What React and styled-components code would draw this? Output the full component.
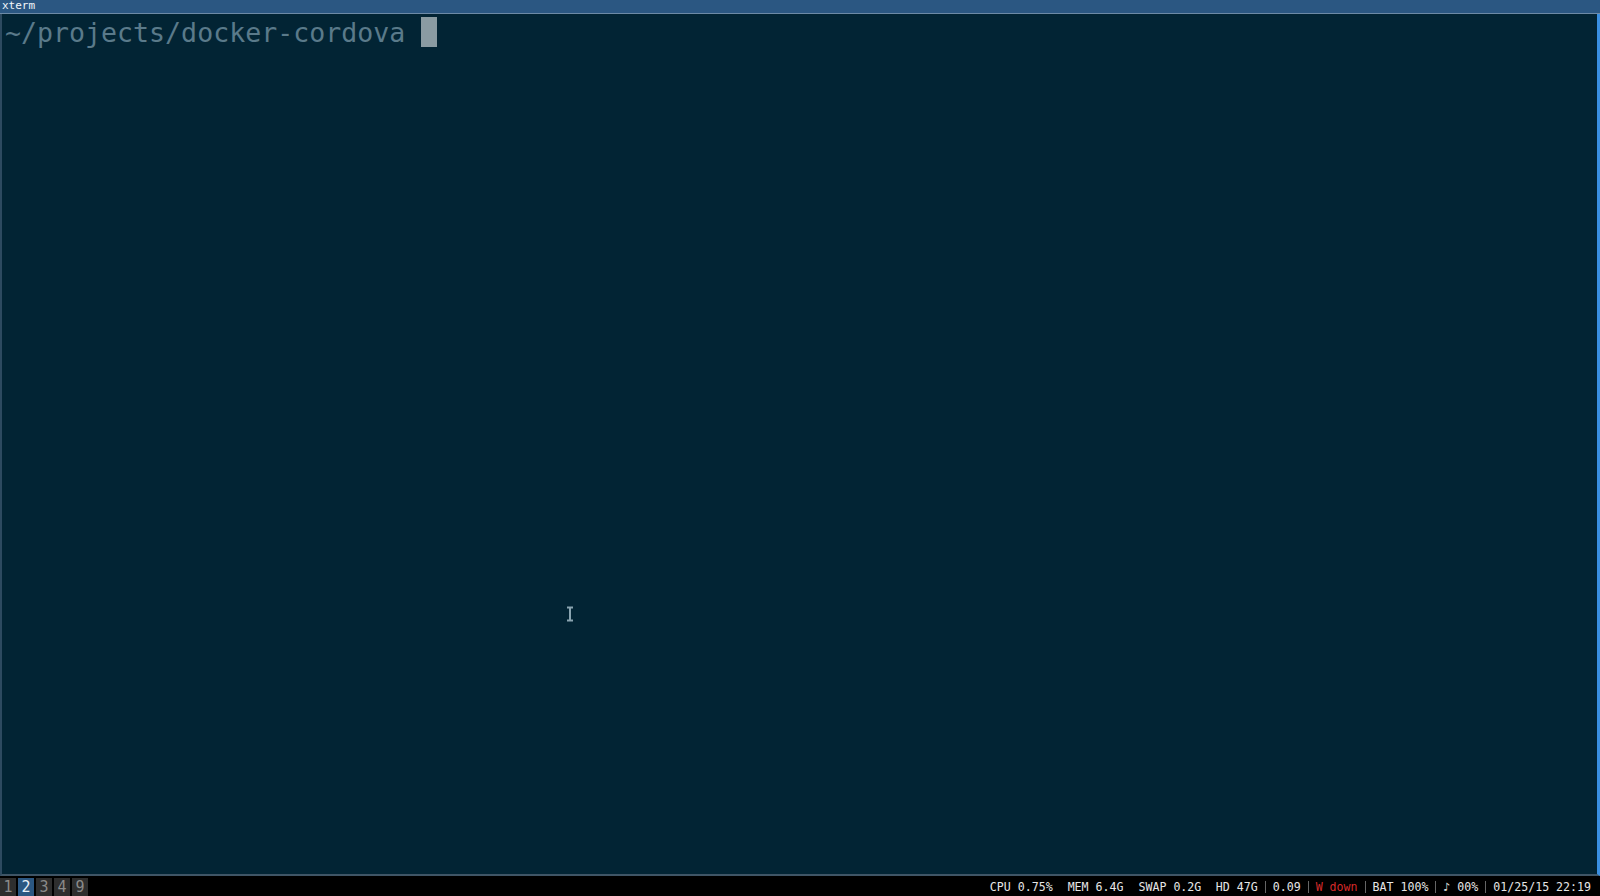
import React from "react";
import { styled, createGlobalStyle } from "styled-components";

const GlobalStyle = createGlobalStyle`
  html, body {
    margin: 0;
    padding: 0;
    background: #000;
    overflow: hidden;
  }
`;

const Screen = styled.div`
  width: 1600px;
  height: 896px;
  display: flex;
  flex-direction: column;
  background: #000;
  position: relative;
`;

const TitleBar = styled.div`
  height: 13px;
  background: #2b5782;
  border-bottom: 1px solid #6d8aa6;
  color: #f2f6fa;
  font-family: "DejaVu Sans Mono", monospace;
  font-size: 11px;
  line-height: 12px;
  padding-left: 2px;
`;

const Terminal = styled.div`
  flex: 1;
  background: #022434;
  border-left: 2px solid #2d4a60;
  border-right: 3px solid #3a8fe2;
  border-bottom: 2px solid #3f5566;
  padding: 2px 0 0 3px;
`;

const Line = styled.div`
  display: flex;
  align-items: center;
  height: 32px;
  font-family: "DejaVu Sans Mono", monospace;
  font-size: 26.6px;
  color: #5a7a8a;
  white-space: pre;
`;

const Cursor = styled.span`
  display: inline-block;
  width: 16px;
  height: 30px;
  background: #8a9ba2;
  margin-left: 16px;
`;

const BottomBar = styled.div`
  height: 20px;
  display: flex;
  align-items: flex-end;
  justify-content: space-between;
  background: #000;
`;

const Workspaces = styled.div`
  display: flex;
  gap: 2px;
  height: 18px;
`;

const Workspace = styled.div`
  width: 16px;
  height: 18px;
  display: flex;
  align-items: center;
  justify-content: center;
  background: ${(p) => (p.$active ? "#2b5782" : "#2e2e2e")};
  color: ${(p) => (p.$active ? "#e8f0f8" : "#8a8a8a")};
  font-family: "DejaVu Sans Mono", monospace;
  font-size: 15px;
`;

const Status = styled.div`
  display: flex;
  align-items: center;
  height: 18px;
  padding-right: 2px;
  font-family: "DejaVu Sans Mono", monospace;
  font-size: 11.6px;
  color: #e6e6e6;
  white-space: pre;
`;

const Item = styled.span`
  color: ${(p) => (p.$alert ? "#d42a2a" : "#e6e6e6")};
  padding: 0 ${(p) => (p.$wide ? "7.5px" : "7px")};
`;

const Sep = styled.span`
  width: 1px;
  height: 12px;
  background: #666;
`;

const Pointer = styled.svg`
  position: absolute;
  left: 565px;
  top: 606px;
`;

const workspaces = ["1", "2", "3", "4", "9"];

export default function App() {
  return (
    <>
      <GlobalStyle />
      <Screen>
        <TitleBar>xterm</TitleBar>
        <Terminal>
          <Line>
            ~/projects/docker-cordova
            <Cursor />
          </Line>
        </Terminal>
        <BottomBar>
          <Workspaces>
            {workspaces.map((w) => (
              <Workspace key={w} $active={w === "2"}>
                {w}
              </Workspace>
            ))}
          </Workspaces>
          <Status>
            <Item $wide>CPU 0.75%</Item>
            <Item $wide>MEM 6.4G</Item>
            <Item $wide>SWAP 0.2G</Item>
            <Item>HD 47G</Item>
            <Sep />
            <Item>0.09</Item>
            <Sep />
            <Item $alert>W down</Item>
            <Sep />
            <Item>BAT 100%</Item>
            <Sep />
            <Item>♪ 00%</Item>
            <Sep />
            <Item>01/25/15 22:19</Item>
          </Status>
        </BottomBar>
        <Pointer width="10" height="16" viewBox="0 0 10 16">
          <path
            d="M2 1.5h6M5 1.5v13M2 14.5h6"
            stroke="#8aa4b0"
            strokeWidth="2"
            fill="none"
          />
        </Pointer>
      </Screen>
    </>
  );
}
